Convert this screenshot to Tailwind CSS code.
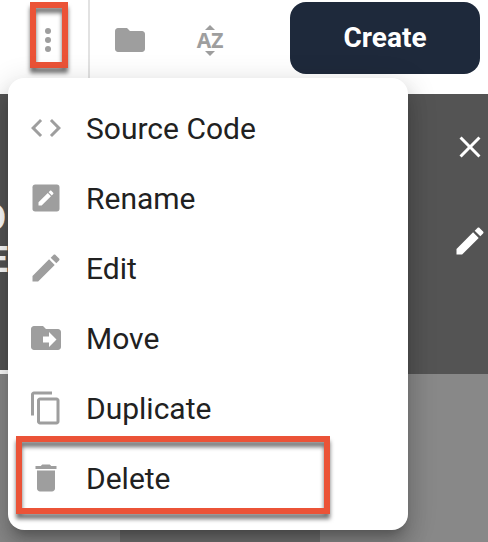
<!DOCTYPE html>
<html lang="en">
<head>
<meta charset="utf-8">
<meta name="viewport" content="width=device-width, initial-scale=1">
<title>File manager</title>
<script src="https://cdn.jsdelivr.net/npm/@tailwindcss/browser@4"></script>
</head>
<body class="relative flex min-h-screen flex-col overflow-hidden bg-white font-['Roboto','Noto_Sans',sans-serif]">

<header class="flex h-[94px] shrink-0 items-start bg-white text-[#9e9e9e]">
  <div class="flex h-20 w-[90px] shrink-0 items-center justify-end border-r-2 border-[#e2e2e2] pr-[22px]">
    <button type="button" aria-label="More actions" class="relative">
      <svg class="size-9" viewBox="0 0 24 24" fill="currentColor"><circle cx="12" cy="6" r="2"/><circle cx="12" cy="12" r="2"/><circle cx="12" cy="18" r="2"/></svg>
      <span class="pointer-events-none absolute -top-5 -bottom-[10px] left-0 w-[38px] border-6 border-[#eb5337] drop-shadow-[0_5px_2px_rgba(0,0,0,0.55)]"></span>
    </button>
  </div>
  <div class="flex h-20 items-center gap-11 pl-[22px]">
    <button type="button" aria-label="New folder">
      <svg class="size-9" viewBox="0 0 24 24" fill="currentColor"><path d="M10 4H4c-1.1 0-1.99.9-1.99 2L2 18c0 1.1.9 2 2 2h16c1.1 0 2-.9 2-2V8c0-1.1-.9-2-2-2h-8l-2-2z"/></svg>
    </button>
    <button type="button" class="flex w-9 flex-col items-center gap-[3px]" aria-label="Sort A to Z">
      <svg class="h-[5px] w-[10px]" viewBox="0 0 10 5" fill="currentColor"><path d="M5 0l5 5H0z"/></svg>
      <span class="font-['Noto_Sans','Open_Sans',sans-serif] text-[21px] leading-[15px] font-bold">AZ</span>
      <svg class="h-[5px] w-[10px]" viewBox="0 0 10 5" fill="currentColor"><path d="M0 0h10L5 5z"/></svg>
    </button>
  </div>
  <button type="button" class="mt-[2px] mr-2 ml-auto h-[72px] w-[190px] rounded-2xl bg-[#1e293b] text-[28px] font-bold text-white">Create</button>
</header>

<main class="flex grow flex-col">
  <section class="relative flex h-[280px] flex-col items-end overflow-hidden bg-[#545454] pt-[35px] text-white">
    <div class="absolute bottom-0 left-0 flex w-2 flex-col items-end border-b-4 border-white pb-[89px] text-[36px] leading-[42px] font-bold">
      <span class="mr-[2px]">O</span>
      <span>E</span>
    </div>
    <div class="flex flex-col gap-[58px]">
      <button type="button" aria-label="Close">
        <svg class="size-9" viewBox="0 0 24 24" fill="currentColor"><path d="M19 6.41L17.59 5 12 10.59 6.41 5 5 6.41 10.59 12 5 17.59 6.41 19 12 13.41 17.59 19 19 17.59 13.41 12z"/></svg>
      </button>
      <button type="button" aria-label="Edit image">
        <svg class="size-9" viewBox="0 0 24 24" fill="currentColor"><path d="M3 17.25V21h3.75L17.81 9.94l-3.75-3.75L3 17.25zM20.71 7.04c.39-.39.39-1.02 0-1.41l-2.34-2.34c-.39-.39-1.02-.39-1.41 0l-1.83 1.83 3.75 3.75 1.83-1.83z"/></svg>
      </button>
    </div>
  </section>
  <section class="grid min-h-[168px] grow grid-cols-[120px_200px_1fr] bg-[#888888]">
    <div class="col-start-2 bg-[#707070]"></div>
  </section>
</main>

<nav aria-label="File actions" class="absolute top-[78px] left-2 w-[400px] rounded-2xl bg-white pt-[15px] pb-[17px] shadow-[0_10px_10px_-6px_rgba(0,0,0,0.2),0_16px_20px_2px_rgba(0,0,0,0.14),0_6px_28px_4px_rgba(0,0,0,0.12)]">
  <ul class="text-[30px] text-[#212121]">
    <li><button type="button" class="flex h-[70px] w-full items-center gap-[22px] px-5">
      <svg class="size-9 text-[#9e9e9e]" viewBox="0 0 24 24" fill="currentColor"><path d="M9.4 16.6L4.8 12l4.6-4.6L8 6l-6 6 6 6 1.4-1.4zm5.2 0l4.6-4.6-4.6-4.6L16 6l6 6-6 6-1.4-1.4z"/></svg>
      <span>Source Code</span></button></li>
    <li><button type="button" class="flex h-[70px] w-full items-center gap-[22px] px-5">
      <svg class="size-9 text-[#9e9e9e]" viewBox="0 0 24 24" fill="currentColor"><rect x="3" y="3" width="18" height="18" rx="1.8"/><path fill="#fff" d="M7 14.9V17h2.1l6.2-6.2-2.1-2.1L7 14.9zM16.8 9.3c.25-.25.25-.6 0-.85l-1.25-1.25c-.25-.25-.6-.25-.85 0l-.95.95 2.1 2.1.95-.95z"/></svg>
      <span>Rename</span></button></li>
    <li><button type="button" class="flex h-[70px] w-full items-center gap-[22px] px-5">
      <svg class="size-9 text-[#9e9e9e]" viewBox="0 0 24 24" fill="currentColor"><path d="M3 17.25V21h3.75L17.81 9.94l-3.75-3.75L3 17.25zM20.71 7.04c.39-.39.39-1.02 0-1.41l-2.34-2.34c-.39-.39-1.02-.39-1.41 0l-1.83 1.83 3.75 3.75 1.83-1.83z"/></svg>
      <span>Edit</span></button></li>
    <li><button type="button" class="flex h-[70px] w-full items-center gap-[22px] px-5">
      <svg class="size-9 text-[#9e9e9e]" viewBox="0 0 24 24" fill="currentColor"><path d="M20 6h-8l-2-2H4c-1.1 0-2 .9-2 2v12c0 1.1.9 2 2 2h16c1.1 0 2-.9 2-2V8c0-1.1-.9-2-2-2zm-6 12v-3h-4v-4h4V8l5 5-5 5z"/></svg>
      <span>Move</span></button></li>
    <li><button type="button" class="flex h-[70px] w-full items-center gap-[22px] px-5">
      <svg class="size-9 text-[#9e9e9e]" viewBox="0 0 24 24" fill="currentColor"><path d="M16 1H4c-1.1 0-2 .9-2 2v14h2V3h12V1zm3 4H8c-1.1 0-2 .9-2 2v14c0 1.1.9 2 2 2h11c1.1 0 2-.9 2-2V7c0-1.1-.9-2-2-2zm0 16H8V7h11v14z"/></svg>
      <span>Duplicate</span></button></li>
    <li class="relative"><button type="button" class="flex h-[70px] w-full items-center gap-[22px] px-5">
      <svg class="size-9 text-[#9e9e9e]" viewBox="0 0 24 24" fill="currentColor"><path d="M6 19c0 1.1.9 2 2 2h8c1.1 0 2-.9 2-2V7H6v12zM19 4h-3.5l-1-1h-5l-1 1H5v2h14V4z"/></svg>
      <span>Delete</span></button>
      <div class="pointer-events-none absolute -top-[7px] -bottom-px left-2 w-[314px] border-6 border-[#eb5337] drop-shadow-[0_5px_2px_rgba(0,0,0,0.55)]"></div></li>
  </ul>
</nav>

</body>
</html>
